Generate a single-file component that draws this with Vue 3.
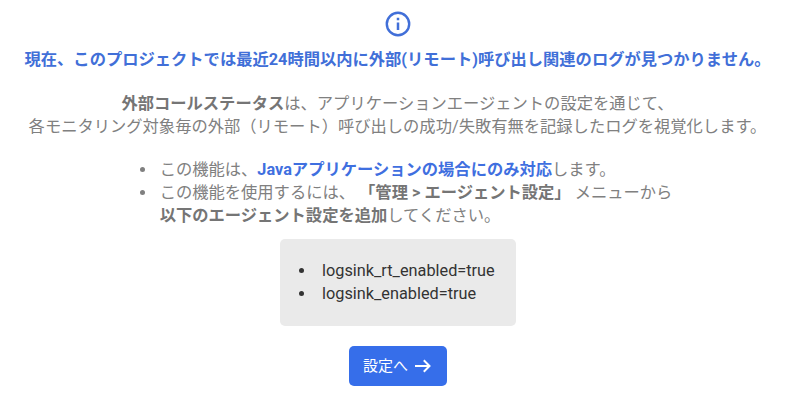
<script setup>
const options = ['logsink_rt_enabled=true', 'logsink_enabled=true']
</script>

<template>
  <main class="notice">
    <svg class="info" viewBox="0 0 26 26" fill="none" aria-hidden="true">
      <circle cx="13" cy="13" r="11.2" stroke="currentColor" stroke-width="2.4" />
      <path d="M13 11.6v7.4M13 6.8v2.5" stroke="currentColor" stroke-width="2.5" />
    </svg>
    <h1 class="title">現在、このプロジェクトでは最近24時間以内に外部(リモート)呼び出し関連のログが見つかりません。</h1>
    <p class="summary">
      <b>外部コールステータス</b>は、アプリケーションエージェントの設定を通じて、<br>各モニタリング対象毎の外部（リモート）呼び出しの成功/失敗有無を記録したログを視覚化します。
    </p>
    <ul class="steps">
      <li>この機能は、<b class="accent">Javaアプリケーションの場合にのみ対応</b>します。</li>
      <li>この機能を使用するには、 <b>「管理 &gt; エージェント設定」</b> メニューから<br><b>以下のエージェント設定を追加</b>してください。</li>
    </ul>
    <ul class="options">
      <li v-for="option in options" :key="option">{{ option }}</li>
    </ul>
    <button class="action" type="button">
      <span>設定へ</span>
      <svg class="arrow" viewBox="0 0 18 16" fill="none" aria-hidden="true">
        <path d="M1 8h14.5M9.8 2.3 15.5 8l-5.7 5.7" stroke="currentColor" stroke-width="2" />
      </svg>
    </button>
  </main>
</template>

<style>
body {
  background: #fff;
}
</style>

<style scoped>
.notice {
  box-sizing: border-box;
  width: 795px;
  height: 407px;
  padding-top: 11px;
  display: flex;
  flex-direction: column;
  align-items: center;
  font-family: Roboto, "Noto Sans CJK JP", sans-serif;
  font-size: 16.3px;
  line-height: 23px;
  color: #808080;
  white-space: nowrap;
}
.info {
  width: 26px;
  height: 26px;
  flex: none;
  color: #416fd8;
}
.title {
  margin: 11px 0 0;
  font-size: inherit;
  font-weight: 700;
  color: #416fd8;
}
.summary {
  margin: 21px 0 0;
  text-align: center;
}
b {
  font-weight: 700;
  color: #757575;
}
.accent {
  color: #3f6fe0;
}
ul {
  list-style: none;
}
li {
  display: flow-root;
}
li::before {
  content: "";
  float: left;
  width: 5px;
  height: 5px;
  margin: 9px 0 0 -19.5px;
  border-radius: 50%;
  background: currentColor;
}
.steps {
  margin: 20px 0 0;
  padding-left: 37px;
}
.steps li {
  display: block;
}
.options {
  box-sizing: border-box;
  width: 236px;
  height: 87px;
  margin: 12px 0 0;
  padding: 20px 0 0 42.5px;
  border-radius: 5px;
  background: #eaeaea;
  color: #333;
}
.options li {
  display: block;
}
.options li::before {
  margin-left: -23px;
}
.action {
  box-sizing: border-box;
  width: 98px;
  height: 40px;
  margin-top: 20px;
  padding: 0;
  border: 0;
  border-radius: 5px;
  display: flex;
  align-items: center;
  justify-content: center;
  gap: 6px;
  background: #366eea;
  color: #fff;
  font: inherit;
  font-size: 15px;
}
.arrow {
  width: 18px;
  height: 16px;
}
</style>
